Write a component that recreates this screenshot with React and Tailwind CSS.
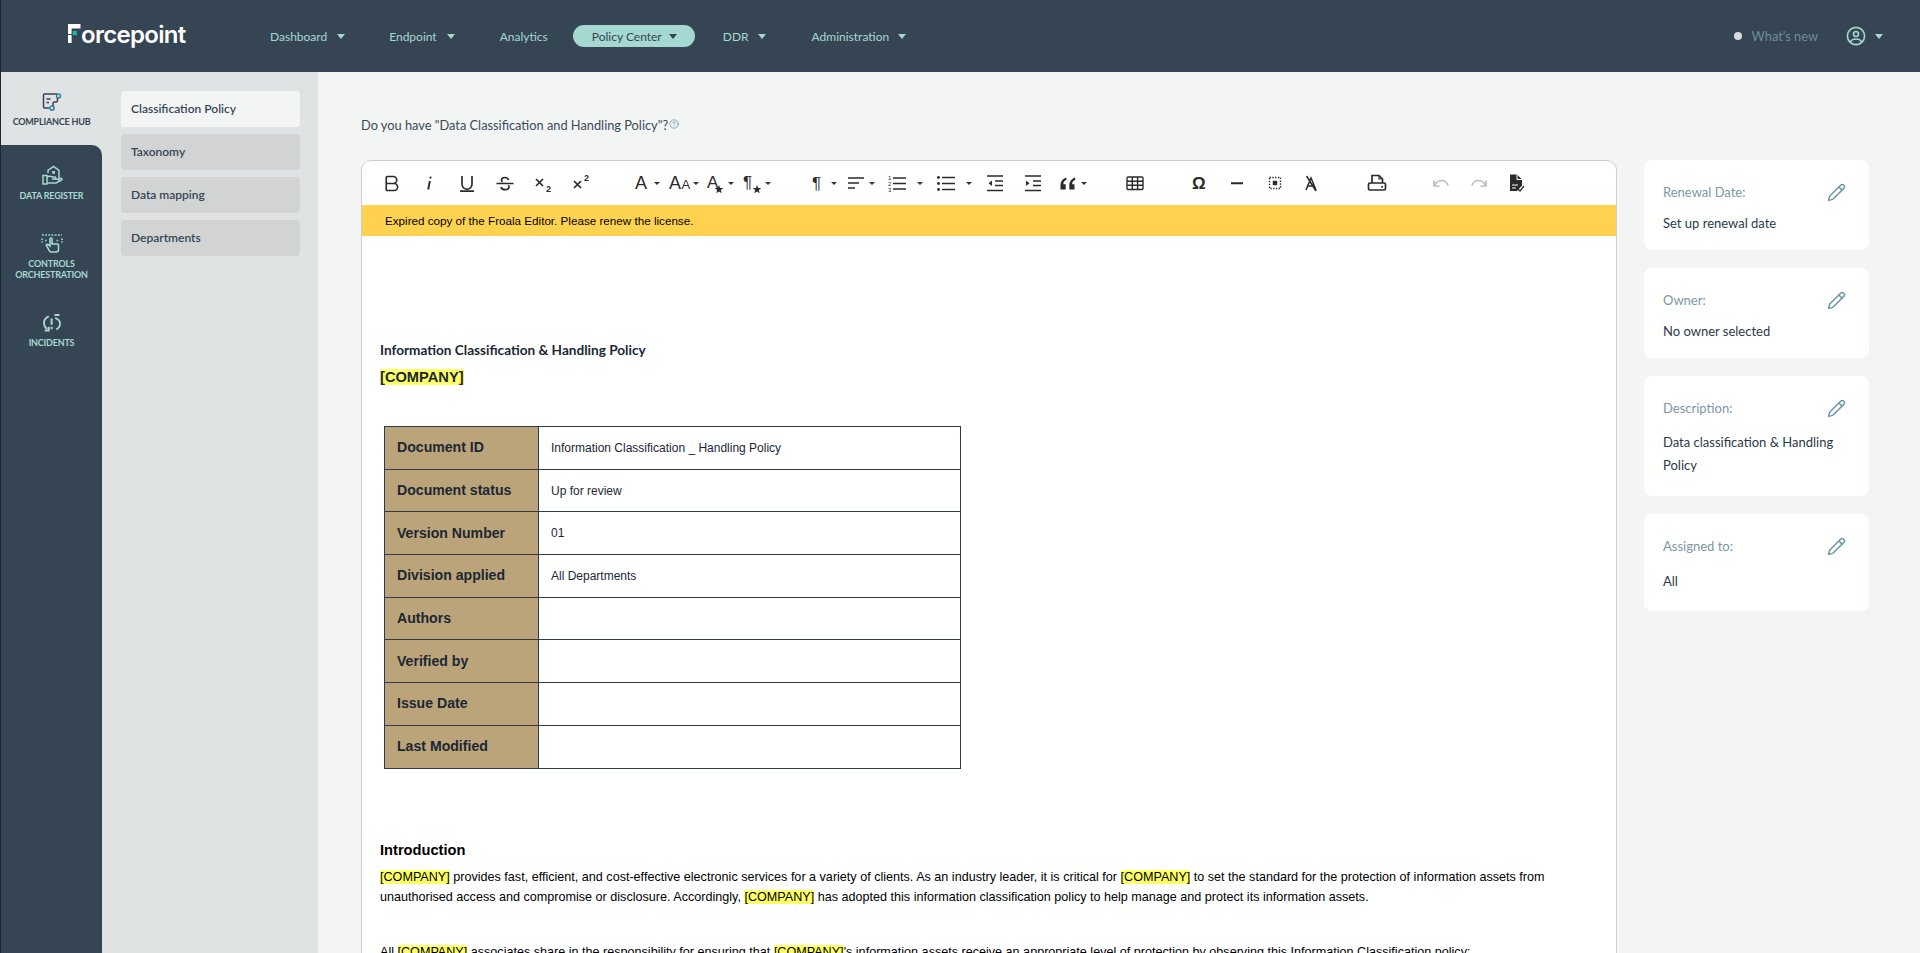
import React from "react";
import { Bold, Pencil, CircleHelp } from "lucide-react";

const Svg = ({ children, className = "", size = 24 }) => (
  <svg width={size} height={size} viewBox="0 0 24 24" fill="none" stroke="currentColor" strokeWidth="1.7" className={className}>
    {children}
  </svg>
);

const T = ({ x, y, s, w = 400, children }) => (
  <text x={x} y={y} fontSize={s} fontWeight={w} fill="currentColor" stroke="none" fontFamily="Liberation Sans, Arial, sans-serif">{children}</text>
);

const Star = ({ x, y, r = 4.6 }) => {
  const pts = [];
  for (let i = 0; i < 10; i++) {
    const a = -Math.PI / 2 + (i * Math.PI) / 5;
    const q = i % 2 ? r * 0.42 : r;
    pts.push(`${x + q * Math.cos(a)},${y + q * Math.sin(a)}`);
  }
  return <polygon points={pts.join(" ")} fill="currentColor" stroke="none" />;
};

const Caret = ({ far }) => <span className={`${far ? "ml-[8px]" : "ml-[1px]"} h-0 w-0 border-x-[3px] border-t-[3px] border-x-transparent border-t-[#333]`} />;

const NavCaret = ({ className = "border-t-[#a5d8d0]" }) => (
  <span className={`block h-0 w-0 border-x-[4.5px] border-t-[5px] border-x-transparent ${className}`} />
);

const toolbar = [
  { w: "w-[38px]", icon: <Bold size={21} strokeWidth={1.9} /> },
  { w: "w-[38px]", icon: <Svg><path d="M12.9 10 11.2 18.5" strokeWidth="1.9" /><circle cx="13.5" cy="6.6" r="1.1" fill="currentColor" stroke="none" /></Svg> },
  { w: "w-[38px]", icon: <Svg><path d="M7 5v8.2a5 5 0 0 0 10 0V5" /><path d="M5 20.2h14" /></Svg> },
  { w: "w-[38px]", icon: <Svg><path d="M15.5 9c-.5-1.7-2-2.5-3.5-2.5-2 0-3.5 1-3.5 2.5 0 .8.3 1.5 1 2" /><path d="M3.5 12.5h17" /><path d="M15.4 14.2c.4.5.6 1 .6 1.6 0 1.8-1.8 2.9-4 2.9-2 0-3.6-.9-4-2.7" /></Svg> },
  { w: "w-[38px]", icon: <Svg><path d="m5 8 7 7M12 8l-7 7" /><T x="15" y="21" s="9" w={700}>2</T></Svg> },
  { w: "w-[60px]", icon: <Svg><path d="m5 10 7 7M12 10l-7 7" /><T x="15" y="10" s="9" w={700}>2</T></Svg> },
  { w: "w-[39px]", caret: true, icon: <Svg><T x="6" y="18" s="18">A</T></Svg> },
  { w: "w-[35px]", caret: true, icon: <Svg><T x="1" y="18" s="18">A</T><T x="13.5" y="18" s="13">A</T></Svg> },
  { w: "w-[37px]", caret: true, icon: <Svg><T x="4" y="16.5" s="17">A</T><Star x={16} y={18.5} /></Svg> },
  { w: "w-[66px]", caret: true, icon: <Svg><T x="3" y="16.5" s="17">¶</T><Star x={17} y={18.5} /></Svg> },
  { w: "w-[38px]", caret: true, icon: <Svg><T x="6" y="18" s="17">¶</T></Svg> },
  { w: "w-[41px]", caret: true, icon: <Svg><path d="M4 7h16M4 12h11M4 17h7" /></Svg> },
  { w: "w-[49px]", caret: true, far: true, icon: <Svg><T x="3" y="9" s="6">1</T><T x="3" y="15" s="6">2</T><T x="3" y="21" s="6">3</T><path d="M8 7h13M8 12.5h13M8 18h13" /></Svg> },
  { w: "w-[49px]", caret: true, far: true, icon: <Svg><circle cx="4.5" cy="6.5" r="1.4" fill="currentColor" stroke="none" /><circle cx="4.5" cy="12.5" r="1.4" fill="currentColor" stroke="none" /><circle cx="4.5" cy="18.5" r="1.4" fill="currentColor" stroke="none" /><path d="M8 6.5h13M8 12.5h13M8 18.5h13" /></Svg> },
  { w: "w-[38px]", icon: <Svg><path d="M4 5h16M12 10h8M12 14.5h8M4 19.5h16" /><path d="M9 9.5v5.5L5.5 12.2z" fill="currentColor" stroke="none" /></Svg> },
  { w: "w-[35px]", icon: <Svg><path d="M4 5h16M12 10h8M12 14.5h8M4 19.5h16" /><path d="M5 9.5v5.5l3.5-2.8z" fill="currentColor" stroke="none" /></Svg> },
  { w: "w-[67px]", caret: true, icon: <Svg><path d="M10.2 6.5C7 7.6 4.5 10.5 4.5 14v4.5h5.2v-5.3H7.3c0-2 1.2-3.6 3.3-4.7zM19 6.5c-3.2 1.1-5.7 4-5.7 7.5v4.5h5.2v-5.3h-2.4c0-2 1.2-3.6 3.3-4.7z" fill="currentColor" stroke="none" /></Svg> },
  { w: "w-[64px]", icon: <Svg><rect x="4" y="6" width="16" height="12.5" rx="1" strokeWidth="1.4" /><path d="M4 10.2h16M4 14.3h16M9.3 6v12.5M14.6 6v12.5" strokeWidth="1.4" /></Svg> },
  { w: "w-[38px]", icon: <Svg><T x="5" y="18" s="17" w={700}>Ω</T></Svg> },
  { w: "w-[38px]", icon: <Svg><path d="M6 12.3h12" strokeWidth="2" /></Svg> },
  { w: "w-[36px]", icon: <Svg><rect x="6.5" y="6.5" width="11" height="11" strokeDasharray="1.4 1.4" strokeWidth="1.4" /><rect x="9.8" y="9.8" width="4.4" height="4.4" fill="currentColor" stroke="none" /></Svg> },
  { w: "w-[66px]", icon: <Svg><path d="M7 19 12 7l5 12M9 15h6M7.5 5l9.5 15" strokeWidth="1.5" /></Svg> },
  { w: "w-[64px]", icon: <Svg><path d="M7 12V4.5h7l3.5 3.5V12" /><path d="M14 4.5V8h3.5" strokeWidth="1.2" /><rect x="3.5" y="12" width="17" height="7" rx="1.5" /><circle cx="17" cy="15.7" r="1" fill="currentColor" stroke="none" /></Svg> },
  { w: "w-[38px]", muted: true, icon: <Svg><path d="M5 9.5v5.5h5.5" /><path d="M5.5 14.5C7 11 10 9.5 13 9.5c3 0 5 1.8 6 5" /></Svg> },
  { w: "w-[37px]", muted: true, icon: <Svg><path d="M19 9.5v5.5h-5.5" /><path d="M18.5 14.5C17 11 14 9.5 11 9.5c-3 0-5 1.8-6 5" /></Svg> },
  { w: "w-[24px]", icon: <Svg><path d="M6 3.5h7l5 5v6l-5 5.5H6z" fill="currentColor" stroke="none" /><path d="M13 3.5v5h5" stroke="#fff" strokeWidth="1" /><path d="M8 14h6M8 17h4" stroke="#fff" strokeWidth="1" /><path d="m14 18 2 2 4-5" strokeWidth="1.3" /></Svg> },
];

const navItems = [
  { label: "Dashboard", caret: true, cls: "ml-[82px]" },
  { label: "Endpoint", caret: true, cls: "ml-[44px]" },
  { label: "Analytics", cls: "ml-[45px]" },
  { label: "DDR", caret: true, cls: "ml-[28px]" },
  { label: "Administration", caret: true, cls: "ml-[46px]" },
];

const Nav = () => (
  <header className="flex h-[72px] shrink-0 items-center bg-[#364553] font-['Lato',sans-serif] text-[12px] text-[#a5d8d0]">
    <div className="ml-[67px] mb-[3px] flex w-[120px] items-center text-white">
      <svg width="13" height="19" viewBox="0 0 13 19" className="mb-[2px] shrink-0">
        <rect x="0" y="0" width="12.5" height="4.5" fill="#fff" />
        <rect x="0" y="0" width="3.6" height="10" fill="#fff" />
        <rect x="0" y="11" width="3.6" height="8" fill="#fff" />
        <rect x="4.6" y="7" width="4.4" height="4.2" fill="#19b5a5" />
      </svg>
      <span className="font-['Inter',sans-serif] text-[24px] font-semibold leading-none tracking-[-0.7px]">orcepoint</span>
    </div>
    {navItems.slice(0, 3).map((n) => (
      <div key={n.label} className={`flex items-center gap-[10px] ${n.cls}`}>
        <span className="pt-[2px]">{n.label}</span>
        {n.caret && <NavCaret />}
      </div>
    ))}
    <div className="ml-[25px] flex h-[22px] w-[122px] items-center gap-[7px] rounded-[11px] bg-[#a5d8d0] pl-[19px] text-[#364553]">
      <span className="pt-[2px]">Policy Center</span>
      <NavCaret className="border-t-[#364553]" />
    </div>
    {navItems.slice(3).map((n) => (
      <div key={n.label} className={`flex items-center gap-[9px] ${n.cls}`}>
        <span className="pt-[2px]">{n.label}</span>
        {n.caret && <NavCaret />}
      </div>
    ))}
    <div className="ml-auto flex items-center pr-[37px]">
      <span className="h-[8px] w-[8px] rounded-full bg-[#d8dcdc]" />
      <span className="ml-[10px] pt-[2px] text-[12.8px] text-[#6f8c99]">What's new</span>
      <svg width="20" height="20" viewBox="0 0 20 20" fill="none" stroke="#a5d8d0" strokeWidth="1.6" className="ml-[28px]">
        <circle cx="10" cy="10" r="8.6" />
        <circle cx="10" cy="8" r="2.5" />
        <path d="M4.6 16c.8-2.2 2.8-3 5.4-3s4.6.8 5.4 3" />
      </svg>
      <span className="ml-[9px]"><NavCaret /></span>
    </div>
  </header>
);

const SideItem = ({ icon, label, cls }) => (
  <div className={`flex flex-col items-center text-center text-[9px] font-bold uppercase leading-[11px] tracking-[-0.2px] ${cls}`}>
    {icon}
    {label}
  </div>
);

const Sidebar = () => (
  <aside className="flex w-[101px] shrink-0 flex-col bg-[#e0e3e4] font-['Lato',sans-serif]">
    <div className="h-[73px] shrink-0 pt-[20px] text-[#364553]">
      <SideItem
        cls="gap-[4px]"
        label="Compliance Hub"
        icon={
          <svg width="22" height="20" viewBox="0 0 22 20" fill="none" stroke="#364553" strokeWidth="1.5">
            <path d="M16 2H3.5a1 1 0 0 0-1 1v12a1 1 0 0 0 1 1H8" />
            <path d="M5.5 7h4M5.5 10.5h2.5" strokeWidth="1.7" />
            <circle cx="17.5" cy="4" r="2" stroke="#2f7fa0" />
            <circle cx="11" cy="16" r="2.1" stroke="#2f7fa0" />
            <path d="M16.5 6v2.5c0 1-.6 1.5-1.5 1.5h-1.5c-1 0-1.5.6-1.5 1.5V14" />
          </svg>
        }
      />
    </div>
    <div className="flex-1 rounded-tr-[10px] bg-[#364553] pt-[20px] text-[#a5d8d0]">
      <SideItem
        cls="gap-[4px]"
        label="Data Register"
        icon={
          <svg width="22" height="21" viewBox="0 0 22 21" fill="none" stroke="#a5d8d0" strokeWidth="1.5">
            <path d="M7 8V5.5L12.5 1.5 18 5.5V16" />
            <rect x="11.2" y="6" width="2.8" height="2.8" fill="#a5d8d0" stroke="none" />
            <path d="M2 10.5h4v8.5H2z" />
            <path d="M6 12c2-1.5 3.5-1 6 0h2c1 .2 1 1.8 0 2h-3l6.5.3 3-1c.5.6.5 1.3 0 1.8L15 18H6" />
          </svg>
        }
      />
      <SideItem
        cls="mt-[32px] gap-[5px]"
        label={<span>Controls<br />Orchestration</span>}
        icon={
          <svg width="22" height="20" viewBox="0 0 22 20" fill="none" stroke="#a5d8d0" strokeWidth="1.6">
            <path d="M1 2h20" strokeDasharray="1.8 1.4" />
            <path d="M1 5.5v4M21 5.5v4" strokeDasharray="1.6 1.2" />
            <path d="M4 7.5h2.5M15.5 7.5H18" strokeDasharray="1.6 1.2" />
            <path d="M9 6v7l-2.3-1.6c-1-.4-1.8.5-1.2 1.3L8.5 18c.5.6 1 1 2 1h4.5c1.5 0 2.5-1 2.5-2.5V12c0-1.4-2-1.4-2-.2 0-1.3-2.3-1.3-2.3 0 0-1.2-2.2-1.2-2.2 0V6c0-1.3-2-1.3-2 0z" />
          </svg>
        }
      />
      <SideItem
        cls="mt-[33px] gap-[4px]"
        label="Incidents"
        icon={
          <svg width="20" height="20" viewBox="0 0 20 20" fill="none" stroke="#a5d8d0" strokeWidth="1.8">
            <path d="M6.8 3.3C3.9 4.5 2 7 2 10c0 2.6 1.3 4.8 3.3 6.1" />
            <path d="M2.7 17.5H6.8v-3.8" />
            <path d="M12.5 2h5M13.2 4.8C15.9 5.8 18 7.6 18 10.5c0 2.6-1.6 4.9-3.8 6" />
            <path d="M9.6 5.5v6.3" strokeWidth="2" />
            <circle cx="9.6" cy="15" r="1.2" fill="#a5d8d0" stroke="none" />
          </svg>
        }
      />
    </div>
  </aside>
);

const subItems = ["Taxonomy", "Data mapping", "Departments"];

const SubNav = () => (
  <nav className="flex w-[216px] shrink-0 flex-col gap-[7px] bg-[#e0e3e4] pl-[19px] pr-[18px] pt-[19px] font-['Lato',sans-serif] text-[12px] font-semibold text-[#364553]">
    <div className="flex h-[36px] items-center rounded-[4px] bg-[#f3f5f4] pl-[10px] pr-[2px]">Classification Policy</div>
    {subItems.map((s) => (
      <div key={s} className="flex h-[36px] items-center rounded-[4px] bg-[#d1d4d3] pl-[10px]">{s}</div>
    ))}
  </nav>
);

const Toolbar = () => (
  <div className="flex h-[44px] shrink-0 items-center pl-[17px] text-[#2b2b2b]">
    {toolbar.map((t, i) => (
      <div key={i} className={`flex shrink-0 items-center ${t.w} ${t.muted ? "text-[#bdbdbd]" : ""}`}>
        <span className="flex h-[24px] w-[24px] shrink-0 items-center justify-center">{t.icon}</span>
        {t.caret && <Caret far={t.far} />}
      </div>
    ))}
  </div>
);

const rows = [
  ["Document ID", "Information Classification _ Handling Policy"],
  ["Document status", "Up for review"],
  ["Version Number", "01"],
  ["Division applied", "All Departments"],
  ["Authors", ""],
  ["Verified by", ""],
  ["Issue Date", ""],
  ["Last Modified", ""],
];

const Co = () => <span className="bg-[#ffff66]">[COMPANY]</span>;

const Doc = () => (
  <div className="pl-[18px] pr-[17px] pt-[104px] font-['Liberation_Sans',Arial,sans-serif] text-black">
    <div className="font-['Lato',sans-serif] text-[13.6px] font-bold leading-[20px] text-[#1b2733]">Information Classification &amp; Handling Policy</div>
    <div className="mt-[7px] text-[14.67px] font-bold leading-[20px] text-[#1b2733]"><span className="bg-[#ffff66]">[COMPANY]</span></div>
    <table className="ml-[4px] mt-[39px] w-[577px] table-fixed border-collapse text-[#1b2733]">
      <tbody>
        {rows.map(([a, b]) => (
          <tr key={a} className="h-[42.7px]">
            <td className="w-[154px] border border-[#2c3a4a] bg-[#bba47a] pl-[12px] text-[14.1px] font-bold">{a}</td>
            <td className="border border-[#2c3a4a] bg-white pl-[12px] text-[12px]">{b}</td>
          </tr>
        ))}
      </tbody>
    </table>
    <div className="mt-[71px] text-[14.67px] font-bold leading-[20px]">Introduction</div>
    <p className="mt-[7px] text-[12.6px] leading-[20px]">
      <Co /> provides fast, efficient, and cost-effective electronic services for a variety of clients. As an industry leader, it is critical for <Co /> to set the standard for the protection of information assets from unauthorised access and compromise or disclosure. Accordingly, <Co /> has adopted this information classification policy to help manage and protect its information assets.
    </p>
    <p className="mt-[35px] text-[12.6px] leading-[20px]">
      All <Co /> associates share in the responsibility for ensuring that <Co />'s information assets receive an appropriate level of protection by observing this Information Classification policy:
    </p>
  </div>
);

const cards = [
  { label: "Renewal Date:", value: "Set up renewal date", cls: "h-[90px]", vcls: "mt-[9px]" },
  { label: "Owner:", value: "No owner selected", cls: "h-[90px]", vcls: "mt-[9px]" },
  { label: "Description:", value: "Data classification & Handling Policy", cls: "h-[120px]", vcls: "mt-[12px]" },
  { label: "Assigned to:", value: "All", cls: "h-[97px]", vcls: "mt-[13px]" },
];

const Cards = () => (
  <div className="flex w-[225px] shrink-0 flex-col gap-[18px] pt-[88px] font-['Lato',sans-serif] text-[13px]">
    {cards.map((c) => (
      <div key={c.label} className={`rounded-[8px] bg-white pl-[19px] pr-[19px] pt-[23px] ${c.cls}`}>
        <div className="flex h-[20px] items-center justify-between text-[#7c97a3]">
          <span>{c.label}</span>
          <Pencil size={19} strokeWidth={1.9} className="mr-[4px] mb-[2px] text-[#6f97a8]" />
        </div>
        <div className={`pr-[10px] leading-[23px] text-[#2c3a47] ${c.vcls}`}>{c.value}</div>
      </div>
    ))}
  </div>
);

export default function App() {
  return (
    <div className="flex h-screen flex-col overflow-hidden border-l border-[#1d2a33] bg-[#f3f5f4]">
      <Nav />
      <div className="flex min-h-0 flex-1">
        <Sidebar />
        <SubNav />
        <main className="flex min-w-0 flex-1 gap-[27px] pl-[43px]">
          <div className="w-[1256px] shrink-0">
            <div className="flex h-[88px] items-center gap-[1px] pt-[19px] font-['Lato',sans-serif] text-[12.8px] leading-none text-[#3a4a56]">
              <span>Do you have "Data Classification and Handling Policy"?</span>
              <CircleHelp size={10} className="mb-[3px] text-[#6e9aa5]" />
            </div>
            <div className="h-[800px] overflow-hidden rounded-t-[10px] border border-[#cfcfcf] bg-white">
              <Toolbar />
              <div className="flex h-[31px] items-center bg-[#ffd34f] pl-[23px] font-['Liberation_Sans',Arial,sans-serif] text-[11.67px] text-black">
                Expired copy of the Froala Editor. Please renew the license.
              </div>
              <Doc />
            </div>
          </div>
          <Cards />
        </main>
      </div>
    </div>
  );
}
